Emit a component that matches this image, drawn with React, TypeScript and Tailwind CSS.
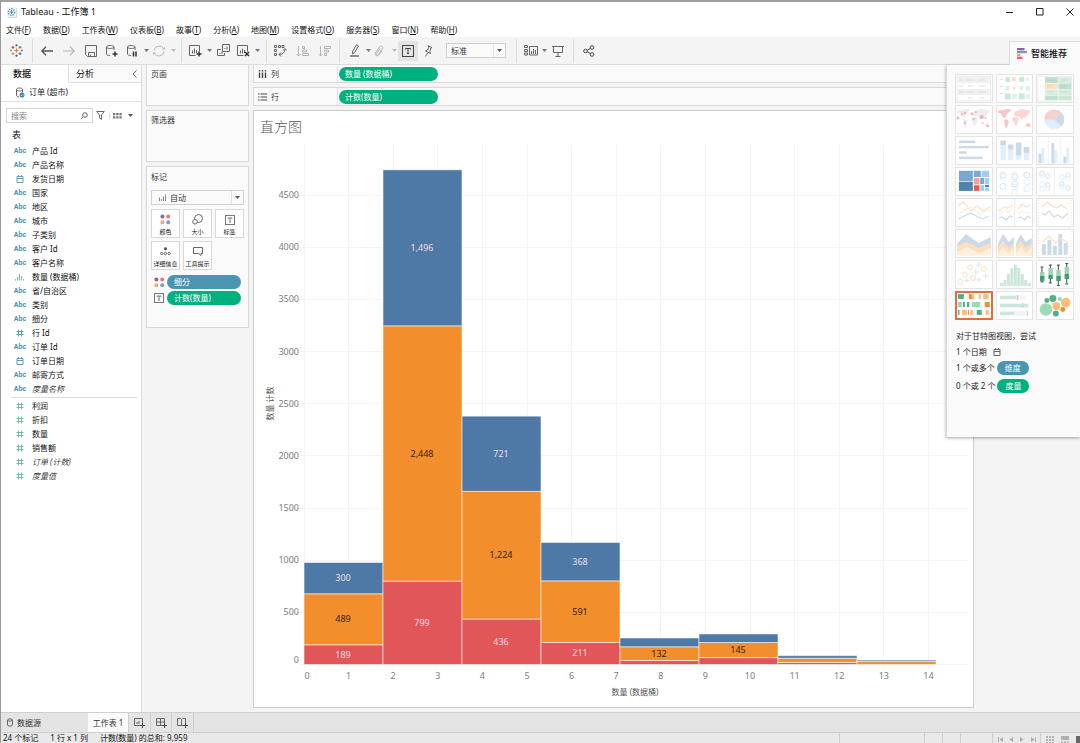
import React from "react";

/* ---------- shared icon helpers ---------- */

type IconProps = { children: React.ReactNode; w?: number; h?: number; color?: string };

function Icon({ children, w = 14, h = 14, color = "#666" }: IconProps) {
  return (
    <svg
      width={w}
      height={h}
      viewBox={`0 0 ${w} ${h}`}
      fill="none"
      stroke={color}
      strokeWidth="1"
      aria-hidden="true"
      className="shrink-0"
    >
      {children}
    </svg>
  );
}

function TableauMark({ size = 12 }: { size?: number }) {
  const plus = (x: number, y: number, r: number) => `M${x - r} ${y}h${2 * r}M${x} ${y - r}v${2 * r}`;
  return (
    <svg width={size} height={size} viewBox="0 0 14 14" fill="none" strokeWidth="1.2" aria-hidden="true">
      <path d={plus(7, 7, 2.2)} stroke="#e8762d" />
      <path d={plus(3.2, 3.6, 1.5)} stroke="#c9505a" />
      <path d={plus(10.8, 3.6, 1.5)} stroke="#5b879b" />
      <path d={plus(3.2, 10.4, 1.5)} stroke="#eb9145" />
      <path d={plus(10.8, 10.4, 1.5)} stroke="#4a6fa5" />
      <path d={plus(7, 1.5, 1.2)} stroke="#5b6591" />
      <path d={plus(7, 12.5, 1.2)} stroke="#5b6591" />
      <path d={plus(1.2, 7, 1)} stroke="#7099a6" />
      <path d={plus(12.8, 7, 1)} stroke="#c9505a" />
    </svg>
  );
}

function WindowMark() {
  return (
    <svg width="10" height="11" viewBox="0 0 10 11" fill="none" aria-hidden="true">
      <rect x="0" y="0" width="9.5" height="10.5" fill="#eef4f8" />
      <circle cx="4.5" cy="5" r="3.2" stroke="#5f95b5" strokeWidth="1.4" strokeDasharray="1.4 1" />
      <path d="M4.5 3.2v3.6M2.7 5h3.6" stroke="#4b83a6" />
      <path d="M9.5 1v9.5H1" stroke="#b9c4cb" strokeWidth=".6" />
    </svg>
  );
}

function Caret({ color = "#555" }: { color?: string }) {
  return (
    <svg width="5" height="3" viewBox="0 0 5 3" aria-hidden="true" className="shrink-0">
      <path d="M0 0h5L2.5 3z" fill={color} />
    </svg>
  );
}

function FourDots() {
  return (
    <svg width="11" height="11" viewBox="0 0 11 11" aria-hidden="true" className="shrink-0">
      <circle cx="2.4" cy="2.4" r="2" fill="#85699a" />
      <circle cx="8.2" cy="2.4" r="2" fill="#f4717c" />
      <circle cx="2.4" cy="8.2" r="2" fill="#f5a77c" />
      <circle cx="8.2" cy="8.2" r="2" fill="#7a9fca" />
    </svg>
  );
}

function LabelIcon() {
  return (
    <Icon w={10} h={10} color="#777">
      <rect x=".5" y=".5" width="9" height="9" />
      <path d="M3 3.6V3h4v.6M5 3v4M4.2 7.2h1.6" />
    </Icon>
  );
}

function CalendarIcon({ color = "#5f9fb5" }: { color?: string }) {
  return (
    <Icon w={8} h={8} color={color}>
      <path d="M1 1.5h6v6H1zM1 3.5h6M2.5 0v1.5M5.5 0v1.5" />
    </Icon>
  );
}

/* ---------- title bar and menu ---------- */

function TitleBar() {
  return (
    <header className="flex h-5 shrink-0 items-center bg-white pl-[6px] text-[9px] leading-3 text-[#111]">
      <WindowMark />
      <span className="ml-1">Tableau - 工作簿 1</span>
      <div className="ml-auto flex items-center gap-[22px] pr-[6px]">
        <button aria-label="最小化">
          <Icon w={8} h={8} color="#222"><path d="M0 4.5h7" /></Icon>
        </button>
        <button aria-label="最大化">
          <Icon w={8} h={8} color="#222"><path d="M.5.5h6.500v6.500h-6.500z" /></Icon>
        </button>
        <button aria-label="关闭">
          <Icon w={8} h={8} color="#222"><path d="M.5.5l7 7M7.500.5l-7 7" /></Icon>
        </button>
      </div>
    </header>
  );
}

const menus: [string, string][] = [
  ["文件", "F"],
  ["数据", "D"],
  ["工作表", "W"],
  ["仪表板", "B"],
  ["故事", "T"],
  ["分析", "A"],
  ["地图", "M"],
  ["设置格式", "O"],
  ["服务器", "S"],
  ["窗口", "N"],
  ["帮助", "H"],
];

function MenuBar() {
  return (
    <nav className="flex h-[15px] shrink-0 items-center gap-3 bg-white pl-[5px] text-[#111]">
      {menus.map(([name, key]) => (
        <button key={key} className="whitespace-nowrap">
          {name}(<u>{key}</u>)
        </button>
      ))}
    </nav>
  );
}

/* ---------- toolbar ---------- */

function Tool({ label, className = "w-5", children }: { label: string; className?: string; children: React.ReactNode }) {
  return (
    <button aria-label={label} className={`flex h-5 shrink-0 items-center justify-center ${className}`}>
      {children}
    </button>
  );
}

const cylinder = "M1.500 3v7c0 .8 1.500 1.500 3.500 1.500M1.500 3c0-2 7.500-2 7.500 0s-7.500 2-7.500 0M9 3v3";
const miniChart = "M.5 1.500h10v6M.5 1.500v10h6M3.500 6.500v3M5.500 4.500v5M7.500 6v3";
const plusBadge = "M10 7.500v5M7.500 10h5";

function Toolbar() {
  return (
    <div role="toolbar" className="flex h-7 shrink-0 items-center border-b border-[#dcdcdc] bg-[#f4f4f4]">
      <div className="flex h-6 w-8 items-center justify-center border-r border-[#dcdcdc]">
        <TableauMark size={13} />
      </div>
      <div className="flex h-6 items-center border-r border-[#dcdcdc] pr-[3px] pl-[3px]">
        <Tool label="撤消" className="w-[22px]">
          <Icon w={12} h={10} color="#555"><path strokeWidth="1.300" d="M12 5H1M5 .7L.9 5 5 9.300" /></Icon>
        </Tool>
        <Tool label="重做" className="w-[22px]">
          <Icon w={12} h={10} color="#b5b5b5"><path strokeWidth="1.200" d="M0 5h11M7 .7L11.100 5 7 9.300" /></Icon>
        </Tool>
        <Tool label="保存" className="w-[21px]">
          <Icon w={12} h={12}><path d="M.5.5h11v11h-9l-2-2zM3.500 11V7.500h6V11M5.500 11V9.500" /></Icon>
        </Tool>
        <Tool label="新建数据源" className="w-[21px]">
          <Icon w={13} h={13}>
            <path d={cylinder} />
            <path d={plusBadge} stroke="#333" strokeWidth="1.500" />
          </Icon>
        </Tool>
        <Tool label="暂停自动更新">
          <Icon w={13} h={13}>
            <path d={cylinder} />
            <path d="M7.500 7.500v5M10 7.500v5" stroke="#333" strokeWidth="1.500" />
          </Icon>
        </Tool>
        <Tool label="自动更新选项" className="w-2"><Caret color="#777" /></Tool>
        <Tool label="运行更新" className="w-[18px]">
          <Icon w={12} h={12} color="#b5b5b5">
            <path d="M1 5.500A5 5 0 0 1 10.500 4M11 6.500A5 5 0 0 1 1.500 8" />
            <path d="M9 4.500h3V2zM3 7.500H0V10z" fill="#b5b5b5" stroke="none" />
          </Icon>
        </Tool>
        <Tool label="运行更新选项" className="w-[10px]"><Caret color="#bbb" /></Tool>
      </div>
      <div className="flex h-6 items-center border-r border-[#dcdcdc] pr-[5px] pl-[3px]">
        <Tool label="新建工作表">
          <Icon w={13} h={13}>
            <path d={miniChart} />
            <path d={plusBadge} stroke="#333" strokeWidth="1.500" />
          </Icon>
        </Tool>
        <Tool label="新建选项" className="w-2"><Caret color="#777" /></Tool>
        <Tool label="复制">
          <Icon w={13} h={13}>
            <path d="M5.500.5h7v7h-7zM4 5.500H.5v6h7V9M8 5V4M10 5.500V2.500M3 10V9M5 10V7.500" />
          </Icon>
        </Tool>
        <Tool label="清除工作表">
          <Icon w={13} h={13}>
            <path d={miniChart} />
            <path d="M8 8l4 4M12 8l-4 4" stroke="#333" strokeWidth="1.500" />
          </Icon>
        </Tool>
        <Tool label="清除选项" className="w-2"><Caret color="#777" /></Tool>
      </div>
      <div className="flex h-6 items-center border-r border-[#dcdcdc] pr-1 pl-[2px]">
        <Tool label="交换行和列" className="w-[22px]">
          <Icon w={13} h={13}>
            <path d="M.5 1.500h2v2h-2zM4.500 1.500h2v2h-2zM8 1.500h2v2H8zM.5 5.500h2v2h-2zM.5 9.500h2v2h-2z" />
            <path d="M11 5c0 3-2 5.500-6 5.500M9.300 6.500L11 4.500l1.700 2M7 8.500l-2 2 2 2" />
          </Icon>
        </Tool>
        <Tool label="升序排序" className="w-[22px]">
          <Icon w={13} h={12} color="#b5b5b5">
            <path d="M2.500 1v10M.5 9l2 2 2-2M6.500 1.500h2v2h-2zM6.500 5h4v2h-4zM6.500 8.500h6v2h-6z" />
          </Icon>
        </Tool>
        <Tool label="降序排序" className="w-[22px]">
          <Icon w={13} h={12} color="#b5b5b5">
            <path d="M2.500 1v10M.5 9l2 2 2-2M6.500 1.500h6v2h-6zM6.500 5h4v2h-4zM6.500 8.500h2v2h-2z" />
          </Icon>
        </Tool>
      </div>
      <div className="flex h-6 items-center border-r border-[#dcdcdc] pr-[10px] pl-[6px]">
        <Tool label="突出显示" className="w-[18px]">
          <Icon w={10} h={13}>
            <path d="M2.500 7.500L6.500.8l2 1.200-4 6.800-2 1zM2.500 7.500v2.300" />
            <path d="M0 12h9" strokeWidth="1.400" />
          </Icon>
        </Tool>
        <Tool label="突出显示选项" className="w-2"><Caret color="#777" /></Tool>
        <Tool label="组成员" className="w-[14px]">
          <Icon w={10} h={12} color="#b5b5b5">
            <path d="M2 7l3.500-5c1.500-2 4.200-.3 3 1.700L4.500 9.500c-1 1.500-2.800.5-2-1L6 3.500M2 7c-2 3 .8 5 2.800 3L8 6" />
          </Icon>
        </Tool>
        <Tool label="组选项" className="ml-1 w-2"><Caret color="#bbb" /></Tool>
        <Tool label="显示标记标签" className="w-5 bg-[#e3e3e3]">
          <Icon w={12} h={12} color="#444">
            <rect x=".5" y=".5" width="11" height="11" />
            <path d="M3.500 4.500v-1h5v1M6 3.500v5M5 8.500h2" />
          </Icon>
        </Tool>
        <Tool label="固定轴">
          <Icon w={9} h={12}>
            <path d="M4 .7l4 2-1.200.5-1 3.300.7 2L1.500 6 3.600 5l1.300-3zM4 7.500L1.500 11.500" />
          </Icon>
        </Tool>
        <div className="relative ml-2 flex h-[15px] w-[60px] items-center border border-[#cfcfcf] bg-[#fafafa]">
          <select aria-label="适合" className="h-full w-full appearance-none bg-transparent pl-1 text-[8px] leading-[13px] text-[#333]">
            <option>标准</option>
          </select>
          <span className="pointer-events-none absolute inset-y-0 right-0 flex w-3 items-center justify-center border-l border-[#e2e2e2]">
            <Caret />
          </span>
        </div>
      </div>
      <div className="flex h-6 items-center border-r border-[#dcdcdc] pr-[5px] pl-[5px]">
        <Tool label="显示/隐藏卡" className="w-[18px]">
          <Icon w={14} h={11}>
            <path d="M.5.5h3v2h-3zM.5 4.500h3v2h-3zM.5 8h3v2h-3zM5.500 1.500h8v8.500h-8zM7.500 9V6M9.500 9V4M11.500 9V5" />
          </Icon>
        </Tool>
        <Tool label="卡选项" className="w-2"><Caret color="#777" /></Tool>
        <Tool label="演示模式">
          <Icon w={12} h={12}><path d="M0 1.500h12M1.500 1.500v6h9v-6M6 7.500v3.500M3.500 11.500h5" /></Icon>
        </Tool>
      </div>
      <div className="flex h-6 items-center pl-[5px]">
        <Tool label="共享">
          <Icon w={12} h={12} color="#444">
            <circle cx="2.500" cy="6" r="1.800" />
            <circle cx="9" cy="2.500" r="1.800" />
            <circle cx="9" cy="9.500" r="1.800" />
            <path d="M4.200 5.200l3.200-1.800M4.200 6.800l3.200 1.800" />
          </Icon>
        </Tool>
      </div>
      <button className="relative z-20 -mb-px ml-auto flex h-6 w-[71px] items-center self-end border-t border-l border-[#dcdcdc] bg-[#fafafa] pl-[7px] text-[9px] font-medium text-[#111]">
        <svg width="10" height="11" viewBox="0 0 10 11" aria-hidden="true">
          <rect x="0" y="0" width="7.500" height="2.300" fill="#85699a" />
          <rect x="0" y="2.900" width="10" height="2.300" fill="#6f9ac6" />
          <rect x="0" y="5.800" width="3.500" height="2.300" fill="#f5a05c" />
          <rect x="0" y="8.700" width="5.500" height="2.300" fill="#f4616e" />
        </svg>
        <span className="ml-1">智能推荐</span>
      </button>
    </div>
  );
}

/* ---------- data pane ---------- */

type FieldKind = "abc" | "date" | "num" | "bin";
type Field = { name: string; kind: FieldKind; italic?: boolean };

const dimensions: Field[] = [
  { name: "产品 Id", kind: "abc" },
  { name: "产品名称", kind: "abc" },
  { name: "发货日期", kind: "date" },
  { name: "国家", kind: "abc" },
  { name: "地区", kind: "abc" },
  { name: "城市", kind: "abc" },
  { name: "子类别", kind: "abc" },
  { name: "客户 Id", kind: "abc" },
  { name: "客户名称", kind: "abc" },
  { name: "数量 (数据桶)", kind: "bin" },
  { name: "省/自治区", kind: "abc" },
  { name: "类别", kind: "abc" },
  { name: "细分", kind: "abc" },
  { name: "行 Id", kind: "num" },
  { name: "订单 Id", kind: "abc" },
  { name: "订单日期", kind: "date" },
  { name: "邮寄方式", kind: "abc" },
  { name: "度量名称", kind: "abc", italic: true },
];

const measures: Field[] = [
  { name: "利润", kind: "num" },
  { name: "折扣", kind: "num" },
  { name: "数量", kind: "num" },
  { name: "销售额", kind: "num" },
  { name: "订单 (计数)", kind: "num", italic: true },
  { name: "度量值", kind: "num", italic: true },
];

function FieldIcon({ kind, color }: { kind: FieldKind; color: string }) {
  if (kind === "abc") return <span className="font-['Roboto',sans-serif] text-[7px] font-bold text-[#4a90a8]">Abc</span>;
  if (kind === "date") return <CalendarIcon />;
  if (kind === "bin")
    return (
      <Icon w={10} h={8} color="#6fbf9c">
        <path d="M.5 6v1.500M2.500 4v3.500M4.500 1v6.500M6.500 3v4.500M8.500 6v1.500" />
      </Icon>
    );
  return (
    <Icon w={8} h={8} color={color}>
      <path d="M2.500.5v7M5.500.5v7M.5 2.500h7M.5 5.500h7" />
    </Icon>
  );
}

function FieldList({ fields, color }: { fields: Field[]; color: string }) {
  return (
    <ul>
      {fields.map((f) => (
        <li key={f.name} className="flex h-[14px] items-center">
          <span className="flex w-[18px] items-center justify-center">
            <FieldIcon kind={f.kind} color={color} />
          </span>
          <span className={f.italic ? "ml-[3px] whitespace-nowrap italic text-[#444]" : "ml-[3px] whitespace-nowrap text-[#111]"}>
            {f.name}
          </span>
        </li>
      ))}
    </ul>
  );
}

function DataPane() {
  return (
    <aside className="flex w-[141px] shrink-0 flex-col border-r border-[#dcdcdc] bg-white">
      <div className="flex h-[18px] items-stretch text-[9px] text-[#111]">
        <button className="w-[67px] bg-white pl-3 text-left font-medium">数据</button>
        <div className="flex flex-1 items-center border-b border-l border-[#e0e0e0] bg-[#fafafa]">
          <button className="flex-1 pl-[7px] text-left">分析</button>
          <button aria-label="折叠" className="pr-1">
            <Icon w={5} h={8}><path d="M4.500.5L1 4l3.500 3.500" /></Icon>
          </button>
        </div>
      </div>
      <div className="flex h-[19px] items-center border-b border-[#e2e2e2] pl-[14px] text-[#222]">
        <Icon w={10} h={11}>
          <path d="M1.500 2.500v6c0 .8 1 1.500 2.500 1.500M1.500 2.500c0-2 6-2 6 0s-6 2-6 0M7.500 2.500v3" />
          <circle cx="7" cy="8" r="2.500" fill="#3c86a8" stroke="none" />
          <path d="M5.800 8l.9.900 1.600-1.700" stroke="#fff" strokeWidth=".7" />
        </Icon>
        <span className="ml-1">订单 (超市)</span>
      </div>
      <div className="flex items-center pt-[6px] pl-[5px]">
        <label className="flex h-[15px] w-[87px] items-center border border-[#d6d6d6] pr-1 pl-1">
          <input aria-label="搜索" placeholder="搜索" className="w-0 flex-1 text-[8px] leading-3 outline-none placeholder:text-[#888]" />
          <Icon w={7} h={7}><circle cx="4" cy="3" r="2.300" /><path d="M2.300 4.700L.3 6.700" /></Icon>
        </label>
        <button aria-label="筛选字段" className="ml-[3px]">
          <Icon w={9} h={9}><path d="M.7.5h7.600L5.500 4v4.300L3.500 7V4z" /></Icon>
        </button>
        <button aria-label="视图" className="ml-1 flex items-center gap-[6px] border-l border-[#ddd] pl-[3px]">
          <svg width="9" height="6" viewBox="0 0 9 6" fill="#777" aria-hidden="true">
            <path d="M0 0h2.300v2.300H0zM3.200 0h2.300v2.300H3.200zM6.400 0h2.300v2.300H6.400zM0 3.200h2.300v2.300H0zM3.200 3.200h2.300v2.300H3.200zM6.400 3.200h2.300v2.300H6.400z" />
          </svg>
          <Caret />
        </button>
      </div>
      <h2 className="mt-[5px] flex h-[14px] items-center pl-[11px] text-[9px] text-[#111]">表</h2>
      <div className="pt-[2px] pr-1 pl-[10px]">
        <FieldList fields={dimensions} color="#5f9fb5" />
        <hr className="my-px border-[#dedede]" />
        <FieldList fields={measures} color="#6fbf9c" />
      </div>
    </aside>
  );
}

/* ---------- cards ---------- */

const markButtons: { label: string; icon: React.ReactNode }[] = [
  { label: "颜色", icon: <FourDots /> },
  {
    label: "大小",
    icon: (
      <Icon w={11} h={11}>
        <circle cx="6.500" cy="4.500" r="4" />
        <circle cx="3" cy="7.800" r="2.300" fill="#fff" />
      </Icon>
    ),
  },
  { label: "标签", icon: <LabelIcon /> },
  {
    label: "详细信息",
    icon: (
      <Icon w={11} h={9}>
        <circle cx="5.500" cy="1.800" r="1.200" fill="#555" />
        <circle cx="1.800" cy="6.500" r="1.200" />
        <circle cx="5.500" cy="6.500" r="1.200" />
        <circle cx="9.200" cy="6.500" r="1.200" />
      </Icon>
    ),
  },
  {
    label: "工具提示",
    icon: (
      <Icon w={10} h={9}>
        <path d="M.5.5h9v6H8v2L5.800 6.500H.5z" />
      </Icon>
    ),
  },
];

function Cards() {
  return (
    <section className="flex w-[103px] shrink-0 flex-col gap-1 text-[#333]">
      <h2 className="h-[41px] border border-t-0 border-[#d8d8d8] bg-[#fafafa] pt-[3px] pl-1">页面</h2>
      <h2 className="h-[52px] border border-[#d8d8d8] bg-[#fafafa] pt-[3px] pl-1">筛选器</h2>
      <div className="h-[162px] border border-[#d8d8d8] bg-[#fafafa] px-1 pt-1">
        <h2>标记</h2>
        <div className="relative mt-[7px] flex h-[15px] items-center border border-[#d0d0d0] bg-[#fafafa] pl-[7px]">
          <Icon w={8} h={7} color="#888"><path d="M.5 3.500V7M2.500 5V7M4.500 2.500V7M6.500.5V7" /></Icon>
          <select aria-label="标记类型" className="h-full flex-1 appearance-none bg-transparent pl-[3px] text-[8px] leading-[13px]">
            <option>自动</option>
          </select>
          <span className="pointer-events-none absolute inset-y-0 right-0 flex w-3 items-center justify-center border-l border-[#e2e2e2]">
            <Caret />
          </span>
        </div>
        <div className="mt-1 grid grid-cols-3 gap-[3px]">
          {markButtons.map((b) => (
            <button key={b.label} className="flex h-[29px] flex-col items-center justify-end border border-[#d8d8d8] bg-white text-[6px] leading-2 text-[#111]">
              <span className="flex flex-1 items-center pt-px">{b.icon}</span>
              <span className="whitespace-nowrap pb-px">{b.label}</span>
            </button>
          ))}
        </div>
        <div className="mt-[5px] flex flex-col gap-[2px] pr-[3px] pl-[3px]">
          <div className="flex items-center gap-[2px]">
            <FourDots />
            <button className="h-[14px] flex-1 rounded-full bg-[#4996b2] pl-[7px] text-left text-white">细分</button>
          </div>
          <div className="flex items-center gap-[2px]">
            <span className="flex w-[11px]"><LabelIcon /></span>
            <button className="h-[14px] flex-1 rounded-full bg-[#00b180] pl-[7px] text-left text-white">计数(数量)</button>
          </div>
        </div>
      </div>
    </section>
  );
}

function Shelf({ label, icon, pill, first }: { label: string; icon: React.ReactNode; pill: string; first?: boolean }) {
  return (
    <div className={`flex shrink-0 items-center border-b border-l border-[#d8d8d8] bg-[#fafafa] ${first ? "h-[18px]" : "h-[19px] border-t"}`}>
      <div className="flex h-full w-[84px] items-center gap-1 border-r border-[#e2e2e2] pl-1 text-[#333]">
        {icon}
        {label}
      </div>
      <button className="ml-px h-[14px] w-[99px] rounded-full bg-[#00b180] pl-[6px] text-left text-white">{pill}</button>
    </div>
  );
}

/* ---------- chart ---------- */

const RED = "#e15759";
const ORANGE = "#f28e2b";
const BLUE = "#4e79a7";

/* Each bin, bottom to top: red, orange, blue */
const bins: [number, number, number][] = [
  [189, 489, 300],
  [799, 2448, 1496],
  [436, 1224, 721],
  [211, 591, 368],
  [38, 132, 84],
  [66, 145, 82],
  [20, 40, 25],
  [0, 28, 14],
];
const shownLabels = [3, 3, 3, 3, 1, 1, 0, 0];

const X0 = 50;
const Y0 = 525;
const UNIT = 44.6;
const BIN = 79;
const yOf = (v: number) => Y0 - v * 0.1043;

function Histogram() {
  const xs = Array.from({ length: 15 }, (_, i) => i);
  const ys = Array.from({ length: 10 }, (_, i) => i * 500);
  return (
    <svg viewBox="0 0 719 567" className="min-h-0 w-full flex-1" role="img" aria-label="直方图" fontSize="9">
      <g stroke="#f4f4f4" shapeRendering="crispEdges">
        {xs.map((v) => (
          <path key={v} d={`M${X0 + v * UNIT} 5V${Y0 + 4}`} />
        ))}
        {ys.map((v) => (
          <path key={v} d={`M${X0 - 4} ${yOf(v)}H714`} />
        ))}
      </g>
      {bins.map((bin, i) => {
        let total = 0;
        return (
          <g key={i}>
            {bin.map((v, k) => {
              const bottom = yOf(total);
              total += v;
              const top = yOf(total);
              const label = shownLabels[i] === 3 || (shownLabels[i] === 1 && k === 1);
              return (
                <g key={k}>
                  {v > 0 && (
                    <rect
                      x={X0 + i * BIN}
                      y={top}
                      width={BIN}
                      height={bottom - top}
                      fill={[RED, ORANGE, BLUE][k]}
                      stroke="#fff"
                      strokeOpacity=".55"
                      strokeWidth="1"
                    />
                  )}
                  {label && (
                    <text
                      x={X0 + 39 + i * BIN}
                      y={(top + bottom) / 2 + 3}
                      textAnchor="middle"
                      fill={k === 1 ? "#33230f" : "#f0dfe2"}
                    >
                      {v.toLocaleString("en-US")}
                    </text>
                  )}
                </g>
              );
            })}
          </g>
        );
      })}
      <g fill="#7c7c7c">
        {xs.map((v) => (
          <text key={v} x={v === 0 ? X0 + 3 : X0 + v * UNIT} y="539" textAnchor="middle">
            {v}
          </text>
        ))}
        {ys.map((v) => (
          <text key={v} x="45" y={v === 0 ? Y0 - 2 : yOf(v) + 3} textAnchor="end">
            {v}
          </text>
        ))}
      </g>
      <g fill="#555" fontSize="8" textAnchor="middle">
        <text x="381" y="555">数量 (数据桶)</text>
        <text transform="translate(19 264) rotate(-90)">数量 计数</text>
      </g>
    </svg>
  );
}

/* ---------- show-me thumbnails, each drawn on a 38 x 29 grid ---------- */

const boxes = (list: number[][], fill: string) =>
  list.map(([x, y, w, h], i) => <rect key={fill + i} x={x} y={y} width={w} height={h} fill={fill} />);
const rings = (list: number[][], r: number, stroke: string) =>
  list.map(([x, y], i) => <circle key={stroke + i} cx={x} cy={y} r={r} fill="none" stroke={stroke} />);

const LB = "#ccdae7";
const PB = "#e0effb";
const LO = "#fddfbf";
const PO = "#fef0dc";
const LG = "#cbe6da";
const PG = "#dff2e8";

const world = [
  "2,6 5,5 8,5 10,4 14,4 15,6 12,8 10,10 10,12 8,13 6,11 5,8 2,8",
  "9,14 12,15 13,17 12,20 11,22 10,24 9,20 8,16",
  "18,8 20,6 23,5 26,4 32,5 35,6 33,9 31,11 30,14 28,12 26,15 24,12 21,11 18,11",
  "17,12 21,12 23,14 22,17 21,20 19,21 18,17 16,15",
  "30,19 33,18 35,20 34,22 31,22",
];

const thumbs: { name: string; art: React.ReactNode }[] = [
  {
    name: "文本表",
    art: (
      <>
        {boxes([[3, 3, 32, 6], [3, 15, 32, 6]], "#f0f0f0")}
        <rect x="2" y="2" width="34" height="25" fill="none" stroke="#e8e8e8" />
        <path d="M4 6h4M4 12h4M4 18h4M12 6h7M24 6h6M13 12h5M24 12h7M12 18h7M24 18h7M13 24h5M25 24h5" stroke="#d9d9d9" strokeDasharray="2 .5" />
      </>
    ),
  },
  {
    name: "热图",
    art: (
      <>
        {boxes([[9.5, 3, 5, 5], [23.5, 2.8, 5, 5], [9, 19.5, 6, 6], [23, 19.5, 6, 6]], LG)}
        {boxes([[30, 3.5, 3, 3], [9.5, 12, 4, 4], [23.5, 12, 4, 4], [30, 12, 4.5, 4.5], [16, 20, 5, 5], [30, 20.5, 4.5, 4.5]], PG)}
        {boxes([[16, 3, 4, 4], [16.7, 13, 2.5, 2.5]], LO)}
        <path d="M4 5.500h3.500M4 12.500h3.500M4 19.500h3" stroke="#ddd" />
      </>
    ),
  },
  {
    name: "突出显示表",
    art: (
      <>
        <rect x="2" y="2" width="34" height="25" fill="none" stroke="#e8eee9" />
        {boxes([[9, 3, 13, 6], [22.5, 9.3, 13, 6], [9, 21.700, 13, 4.500]], "#bfe0d0")}
        {boxes([[22.5, 3, 13, 6], [9, 15.500, 13, 6], [22.500, 15.500, 13, 6]], "#d6eee0")}
        {boxes([[22.5, 21.700, 13, 4.500]], "#c9e7d8")}
        {boxes([[9, 9.300, 13, 6]], "#fde2c2")}
        <path d="M4 6h3M4 12h3M4 18h3M11 6h7M25 6h6M11 12h6M25 12h6M11 18h7M24 18h9" stroke="#000" strokeOpacity=".08" />
      </>
    ),
  },
  {
    name: "符号地图",
    art: (
      <>
        {world.map((p) => <polygon key={p} points={p} fill="#ededed" />)}
        {[[3, 13, 1.5], [7, 9, 1], [10, 8, 1.2], [17, 9, 1.5], [19, 14, 1], [27, 12, 2], [31, 13, 1], [10, 18, 1], [28, 18, 1], [33, 21, 1.2], [21, 7, 1]].map(([x, y, r], i) => (
          <circle key={i} cx={x} cy={y} r={r} fill="#e58a90" fillOpacity=".6" />
        ))}
      </>
    ),
  },
  {
    name: "填充地图",
    art: world.map((p, i) => <polygon key={p} points={p} fill={i < 2 || i === 4 ? "#f7c6c5" : "#fbd8d6"} />),
  },
  {
    name: "饼图",
    art: (
      <>
        <circle cx="18.500" cy="14.500" r="10" fill="#deeefa" />
        <path d="M18.500 14.500L8.500 14.500A10 10 0 0 1 25.570 7.430z" fill="#f8cfcd" />
        <path d="M18.500 14.500L25.570 7.430A10 10 0 0 1 25.570 21.570z" fill={LB} />
      </>
    ),
  },
  { name: "水平条", art: boxes([[4, 4.500, 16.500, 2.500], [4, 9.800, 30, 2.500], [4, 15.300, 8, 2.500], [4, 20.700, 24, 2.500]], LB) },
  {
    name: "堆叠条",
    art: (
      <>
        {boxes([[4.500, 4.500, 5.500, 19.500], [12, 8.500, 5.500, 15.500], [20, 6.500, 5.500, 17.500], [28, 11, 5.500, 13]], PB)}
        {boxes([[4.500, 4.500, 5.500, 4.500], [12, 8.500, 5.500, 5], [20, 6.500, 5.500, 13], [28, 11, 5.500, 6]], LB)}
      </>
    ),
  },
  {
    name: "并排条",
    art: (
      <>
        <path d="M12.500 1v27M24.500 1v27" stroke="#f0f0f0" />
        {boxes([[5.500, 12, 3, 15.500], [18.500, 14.500, 3, 13], [30.500, 12, 3, 15.500]], PB)}
        {boxes([[2.500, 17.500, 3, 10], [15.500, 7, 3, 20.500], [27.500, 20.500, 3, 7]], LB)}
      </>
    ),
  },
  {
    name: "树状图",
    art: (
      <>
        {boxes([[4, 3.700, 14, 10.300], [19, 3.700, 7, 6.300], [25.500, 11, 4, 6]], "#78a7d0")}
        {boxes([[4, 14.700, 14, 9.300], [30.300, 18, 4, 2]], "#4c84ae")}
        {boxes([[27, 3.700, 7.300, 6.300], [30.300, 11, 4, 6.300], [25.500, 18, 4, 6], [30.300, 20.700, 4, 3.300]], "#9fcdf0")}
        {boxes([[19, 11, 5.700, 6.500]], "#ff9d98")}
        {boxes([[19, 18.300, 5.700, 5.700]], "#e15f58")}
      </>
    ),
  },
  {
    name: "圆视图",
    art: (
      <>
        {rings([[7, 8], [7, 19.500], [19, 10], [19, 17], [31, 8]], 3, "#d4e2ee")}
        {rings([[7, 10], [19, 8], [19, 20], [19, 26], [31, 15], [31, 22]], 3, PB)}
      </>
    ),
  },
  {
    name: "并排圆",
    art: (
      <>
        <path d="M18.500 1v27" stroke="#f0f0f0" />
        {rings([[6, 6], [12, 9], [12, 18], [26, 17], [32, 8], [32, 21]], 2.3, "#d4e2ee")}
        {rings([[6, 8], [6, 17], [6, 22], [12, 21], [26, 20], [32, 11], [26, 10]], 2.3, PB)}
      </>
    ),
  },
  {
    name: "连续线",
    art: (
      <g fill="none" strokeWidth="1.200">
        <path d="M3.500 8L8 4l8 9 6-5 6 5 7-4" stroke={LO} />
        <path d="M3.500 16l6-4 6-3 5 3 5 4 9-4" stroke={PO} />
        <path d="M3.500 21l6-3 6-3 6 3 6 3 7-3" stroke={LB} />
      </g>
    ),
  },
  {
    name: "离散线",
    art: (
      <g fill="none" strokeWidth="1.200">
        <path d="M19 1v27" stroke="#eee" />
        <path d="M3 13l5-4 3 1 6-3M22 11l4-5 4 3 5-2" stroke={LO} />
        <path d="M3 16l5-3 4 1 5-3M22 16l4-3 4 2 5-1" stroke={PO} />
        <path d="M3 20l3-1 4 3 4-4 3 1M22 20l3-1 4 3 3-4 3 2" stroke={LB} />
      </g>
    ),
  },
  {
    name: "双线",
    art: (
      <g fill="none" strokeWidth="1.200">
        <path d="M2 2v25M36 2v25" stroke="#ededed" strokeWidth="2" strokeDasharray="1 2" />
        <path d="M6 9l6-5 4 4 5 2 4-3 7 4" stroke={LO} />
        <path d="M6 15l3 2 4-4 5 6 4-2 5 3 5-5" stroke={LB} />
      </g>
    ),
  },
  {
    name: "面积图（连续）",
    art: (
      <>
        <polygon points="2,15 11,5 24,14 36,8 36,18 24,20 12,15 2,20" fill={LB} />
        <polygon points="2,17 12,13 24,19 36,14 36,26 2,26" fill={LO} />
        <polygon points="2,23 12,18 24,24 36,19 36,26.500 2,26.500" fill={PO} />
      </>
    ),
  },
  {
    name: "面积图（离散）",
    art: (
      <>
        <polygon points="2,15 7,5 13,13 18,8 18,20 2,20" fill={LB} />
        <polygon points="20,15 25,5 30,13 36,9 36,20 20,20" fill={LB} />
        <polygon points="2,18 7,12 13,19 18,14 18,26.500 2,26.500" fill={LO} />
        <polygon points="20,18 25,12 30,19 36,14 36,26.500 20,26.500" fill={LO} />
        <polygon points="2,24 7,18 13,24 18,19 18,26.500 2,26.500" fill={PO} />
        <polygon points="20,24 25,18 30,24 36,19 36,26.500 20,26.500" fill={PO} />
      </>
    ),
  },
  {
    name: "双组合",
    art: (
      <>
        <path d="M2 2v25M36 2v25" stroke="#ededed" strokeWidth="2" strokeDasharray="1 2" />
        {boxes([[6, 15, 4, 11], [11.500, 11, 4, 15], [17, 17, 4, 9], [22.500, 5, 4, 21], [28, 14, 4, 12]], LB)}
        <path d="M7 13l6-6 7 7 5-5 7 5" fill="none" stroke={LO} strokeWidth="1.200" />
      </>
    ),
  },
  {
    name: "散点图",
    art: (
      <>
        {rings([[15, 7.500], [29, 9], [10, 14.500], [18, 18], [5.500, 22]], 2.500, LO)}
        <path d="M24 2v6M21 5h6M21 9v6M18 12h6M31 13v6M28 16h6M24 17v6M21 20h6M12 18v5M9.500 20.500h5" stroke="#d6ebe1" />
      </>
    ),
  },
  {
    name: "直方图",
    art: boxes([[4, 23, 3, 3], [7.500, 20, 3, 6], [11, 14, 3, 12], [14.500, 8, 3, 18], [18, 4.500, 3, 21.500], [21.500, 8, 3, 18], [25, 14, 3, 12], [28.500, 20, 3, 6], [32, 23, 3, 3]], LG),
  },
  {
    name: "盒须图",
    art: (
      <>
        <path d="M6 7v15M14.500 5v18M22.500 5v20M31 3.500v20M4.500 7h3M4.500 22h3M13 5h3M13 23h3M21 5h3M21 25.500h3M29.500 3.500h3M29.500 24h3" stroke="#444" />
        {boxes([[4, 12, 4.500, 4], [12.500, 8, 4.500, 7], [20.500, 10, 4.500, 7], [28.800, 7, 4.500, 7]], "#9bd4b5")}
        {boxes([[4, 16, 4.500, 5], [12.500, 15, 4.500, 4], [20.500, 16, 4.500, 5], [28.800, 14, 4.500, 5]], "#3f9f73")}
      </>
    ),
  },
  {
    name: "甘特图视图",
    art: (
      <>
        {boxes([[3, 3, 6, 5], [12, 11, 2.500, 5], [8, 11, 2, 5], [22, 19, 5, 5], [3, 19, 1.500, 5]], "#57ad8a")}
        {boxes([[3, 11, 4, 5], [17, 11, 8.500, 5]], "#9bd9b4")}
        {boxes([[16.500, 3, 3, 5], [24, 3, 2, 5], [28.500, 3, 5.500, 5], [7, 19, 5, 5], [15.500, 19, 2.500, 5], [31, 19, 3, 5]], "#fdbc78")}
        {boxes([[14, 3, 3, 5], [30, 11, 5, 5], [13, 19, 1, 5]], "#f28e2b")}
      </>
    ),
  },
  {
    name: "标靶图",
    art: (
      <>
        {boxes([[4, 4, 26, 5], [4, 12, 30, 5], [4, 20, 28, 5]], "#f4f4f4")}
        {boxes([[4, 5, 16, 3], [4, 13, 28, 3], [4, 21, 14, 3]], LG)}
        {boxes([[21, 4, 1.500, 5], [26.500, 12, 1, 5], [31, 20, 1, 5]], "#d0d0d0")}
      </>
    ),
  },
  {
    name: "填充气泡图",
    art: (
      <>
        <circle cx="10" cy="18.500" r="6.300" fill="#9cdab5" />
        <circle cx="17" cy="7.500" r="3.500" fill="#57ad8a" />
        <circle cx="11" cy="9.500" r="2.500" fill="#57ad8a" />
        <circle cx="20" cy="22.500" r="3" fill="#57ad8a" />
        <circle cx="24" cy="8" r="2.200" fill="#9cdab5" />
        <circle cx="20.500" cy="15" r="4" fill="#fdbc78" />
        <circle cx="30" cy="11.500" r="4.800" fill="#fdbc78" />
        <circle cx="27" cy="18.500" r="2.500" fill="#f28e2b" />
      </>
    ),
  },
];

const SELECTED = 21;

function ShowMe() {
  return (
    <aside className="absolute top-0 right-0 z-10 flex h-[372px] w-[134px] flex-col border-l border-[#d8d8d8] bg-[#fafafa] pt-[9px] pr-[6px] pl-2 text-[#222] shadow-[0_1px_3px_rgba(0,0,0,0.35)]">
      <div className="grid grid-cols-3 gap-x-[3px] gap-y-[2px]">
        {thumbs.map((t, i) => (
          <button
            key={t.name}
            aria-label={t.name}
            className={
              i === SELECTED
                ? "h-[29px] bg-white outline-2 -outline-offset-2 outline-[#dd7040]"
                : "h-[29px] bg-white outline-1 -outline-offset-1 outline-[#e4e4e4]"
            }
          >
            <svg viewBox="0 0 38 29" className="block h-full w-full" aria-hidden="true">
              {t.art}
            </svg>
          </button>
        ))}
      </div>
      <div className="mt-2 flex flex-col pl-px">
        <p className="flex h-4 items-center whitespace-nowrap">对于甘特图视图，尝试</p>
        <p className="flex h-4 items-center gap-[6px]">
          1 个日期 <CalendarIcon color="#666" />
        </p>
        <p className="flex h-4 items-center gap-[2px]">
          1 个或多个
          <span className="flex h-[14px] w-8 items-center justify-center rounded-full bg-[#4996b2] text-white">维度</span>
        </p>
        <p className="flex h-5 items-center gap-[2px]">
          0 个或 2 个
          <span className="flex h-[14px] w-8 items-center justify-center rounded-full bg-[#00b180] text-white">度量</span>
        </p>
      </div>
    </aside>
  );
}

/* ---------- bottom bars ---------- */

function SheetTabs() {
  const tab = "flex items-center justify-center border-r border-[#cfcfcf]";
  return (
    <nav className="flex h-5 shrink-0 items-stretch border-t border-[#cfcfcf] bg-[#e4e4e4] text-[#333]">
      <button className="flex w-[87px] items-center gap-1 pl-[6px]">
        <Icon w={6} h={9}><path d="M.5 2v5c0 1.500 5 1.500 5 0V2M.5 2c0-1.500 5-1.500 5 0s-5 1.500-5 0" /></Icon>
        数据源
      </button>
      <button className={`w-[41px] bg-[#fafafa] ${tab}`}>工作表 1</button>
      <button aria-label="新建工作表" className={`w-[22px] ${tab}`}>
        <Icon w={11} h={11}>
          <path d="M.5 1.500h8V6M.5 1.500v7H6M3 7V5M5 7V4" />
          <path d="M8.500 6v5M6 8.500h5" stroke="#444" />
        </Icon>
      </button>
      <button aria-label="新建仪表板" className={`w-[21px] ${tab}`}>
        <Icon w={11} h={11}>
          <path d="M.5 1.500h8V6M.5 1.500v7H6M4.500 1.500v7M.5 5h8" />
          <path d="M8.500 6v5M6 8.500h5" stroke="#444" />
        </Icon>
      </button>
      <button aria-label="新建故事" className={`w-[22px] ${tab}`}>
        <Icon w={11} h={11}>
          <path d="M.5 1.500h3l1 1 1-1h3V6M.5 1.500v7H6M4.500 2.500v6" />
          <path d="M8.500 6v5M6 8.500h5" stroke="#444" />
        </Icon>
      </button>
    </nav>
  );
}

function StatusBar() {
  const cell = "border-l border-[#cfcfcf]";
  return (
    <footer className="flex h-[11px] shrink-0 items-stretch border-t border-[#cfcfcf] bg-[#e9e9e9] leading-[10px] text-[#111]">
      <div className="flex flex-1 gap-3 whitespace-nowrap pl-[2px]">
        <span>24 个标记</span>
        <span>1 行 x 1 列</span>
        <span>计数(数量) 的总和: 9,959</span>
      </div>
      <div className={`w-[85px] ${cell}`} />
      <div className={`w-[18px] ${cell}`} />
      <div className={`w-[18px] ${cell}`} />
      <div className={`w-8 ${cell}`} />
      <div className={`flex w-12 items-start justify-center pt-1 ${cell}`}>
        <svg width="38" height="5" viewBox="0 0 38 5" fill="#aaa" aria-hidden="true">
          <path d="M0 0h1v5H0zM5 0v5L1.500 2.500zM15 0v5l-3.500-2.500zM22 0v5l3.500-2.500zM33 0v5l3.500-2.500zM37 0h1v5h-1z" />
        </svg>
      </div>
      <div className={`flex w-10 gap-[7px] overflow-hidden pt-[3px] pl-[5px] ${cell}`}>
        <svg width="8" height="8" viewBox="0 0 8 8" fill="#b0b0b0" aria-hidden="true" className="shrink-0">
          <path d="M0 0h2v2H0zM3 0h2v2H3zM6 0h2v2H6zM0 3h2v2H0zM3 3h2v2H3zM6 3h2v2H6zM0 6h2v2H0zM3 6h2v2H3zM6 6h2v2H6z" />
        </svg>
        <svg width="8" height="8" viewBox="0 0 8 8" fill="#b0b0b0" aria-hidden="true" className="shrink-0">
          <path d="M0 0h8v4H0zM0 5.500h2v2H0zM3 5.500h2v2H3zM6 5.500h2v2H6z" />
        </svg>
        <svg width="8" height="8" viewBox="0 0 8 8" fill="#666" aria-hidden="true" className="shrink-0">
          <rect width="8" height="8" />
        </svg>
      </div>
    </footer>
  );
}

export default function App() {
  return (
    <div className="flex h-screen min-h-[600px] flex-col overflow-hidden border-t-2 border-l border-t-[#a0a0a0] border-l-[#999] bg-[#f4f4f4] font-['Noto_Sans','Noto_Sans_CJK_SC',sans-serif] text-[8px] leading-3">
      <TitleBar />
      <MenuBar />
      <Toolbar />
      <main className="relative flex min-h-0 flex-1">
        <DataPane />
        <div className="flex min-w-0 flex-1 gap-1 pl-1">
          <Cards />
          <section className="flex min-w-0 flex-1 flex-col gap-1 pb-1">
            <Shelf
              first
              label="列"
              pill="数量 (数据桶)"
              icon={<Icon w={9} h={8} color="#444"><path strokeWidth="1.400" d="M1.500 0v1.500M1.500 2.500V8M4.500 0v1.500M4.500 2.500V8M7.500 0v1.500M7.500 2.500V8" /></Icon>}
            />
            <Shelf
              label="行"
              pill="计数(数量)"
              icon={<Icon w={9} h={8} color="#444"><path strokeWidth="1.200" d="M0 1h1.500M2.500 1H9M0 4h1.500M2.500 4H9M0 7h1.500M2.500 7H9" /></Icon>}
            />
            <article className="mr-[106px] flex min-h-0 flex-1 flex-col border border-[#cdcdcd] bg-white">
              <h1 className="flex h-7 shrink-0 items-center pt-1 pl-[6px] text-[14px] leading-5 font-light text-[#555]">直方图</h1>
              <Histogram />
            </article>
          </section>
        </div>
        <ShowMe />
      </main>
      <SheetTabs />
      <StatusBar />
    </div>
  );
}
